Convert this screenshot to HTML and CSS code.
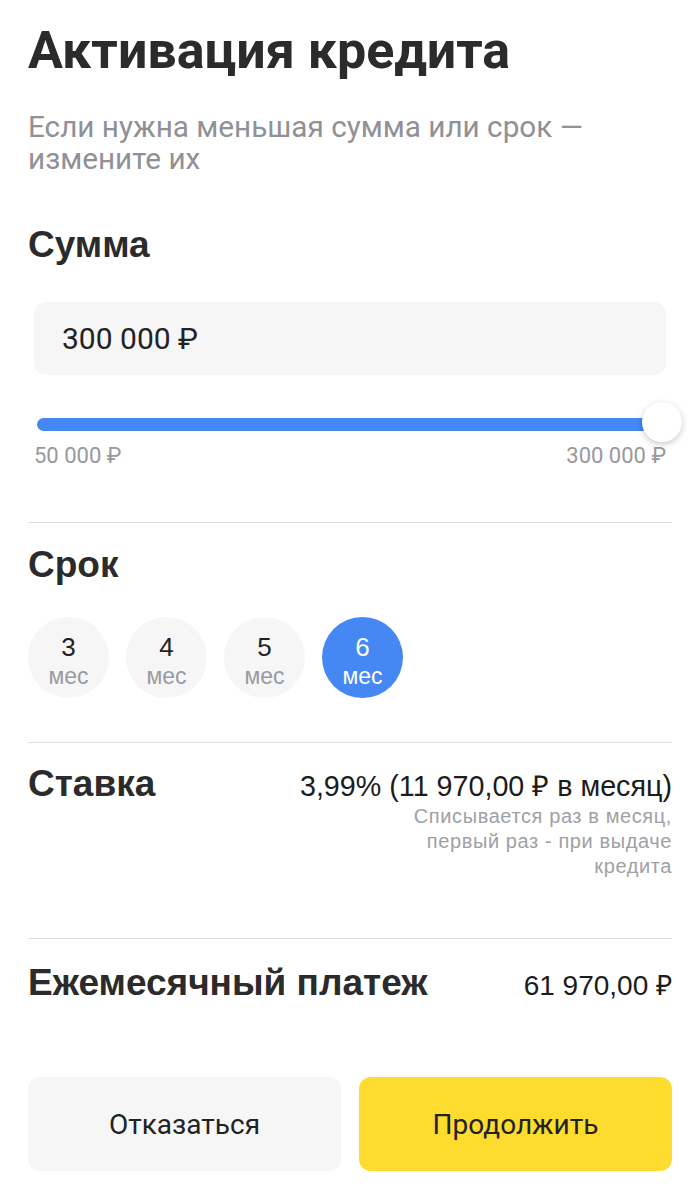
FILE: index.html
```html
<!DOCTYPE html>
<html lang="ru">
<head>
    <meta charset="UTF-8">
    <meta name="viewport" content="width=device-width, initial-scale=1.0">
    <title>Активация кредита</title>
    <link rel="stylesheet" href="styles.css">
</head>
<body>

<div class="page">
    <h1>Активация кредита</h1>
    <p class="subtitle">Если нужна меньшая сумма или срок — измените их</p>

    <section class="block amount">
        <h2>Сумма</h2>
        <div class="amount-input">300 000 ₽</div>
        <div class="slider">
            <div class="track"></div>
            <div class="thumb"></div>
        </div>
        <div class="slider-labels">
            <span>50 000 ₽</span>
            <span>300 000 ₽</span>
        </div>
    </section>

    <section class="block term-block">
        <h2>Срок</h2>
        <div class="terms">
            <div class="term"><span class="num">3</span><span class="unit">мес</span></div>
            <div class="term"><span class="num">4</span><span class="unit">мес</span></div>
            <div class="term"><span class="num">5</span><span class="unit">мес</span></div>
            <div class="term active"><span class="num">6</span><span class="unit">мес</span></div>
        </div>
    </section>

    <section class="block row rate">
        <h2>Ставка</h2>
        <div class="value-col">
            <div class="value">3,99% (11&nbsp;970,00 ₽ в месяц)</div>
            <div class="note">Списывается раз в месяц,<br>первый раз - при выдаче<br>кредита</div>
        </div>
    </section>

    <section class="block row payment">
        <h2>Ежемесячный платеж</h2>
        <div class="value">61&nbsp;970,00 ₽</div>
    </section>

    <div class="actions">
        <button class="btn btn-cancel">Отказаться</button>
        <button class="btn btn-next">Продолжить</button>
    </div>
</div>

</body>
</html>
```

FILE: styles.css
```css
body {
    font-family: Roboto, "Noto Sans", Arial, sans-serif;
    background-color: #fff;
    color: #222;
    margin: 0;
    padding: 0;
}
.page {
    padding: 21px 28px 0;
}
h1 {
    margin: 0;
    font-size: 52px;
    font-weight: 700;
    line-height: 60px;
    color: #2b2b2b;
}
.subtitle {
    margin: 30px 0 0;
    font-size: 29.7px;
    line-height: 32px;
    color: #909095;
    max-width: 600px;
}
h2 {
    margin: 0;
    font-family: "Liberation Sans", Arial, sans-serif;
    font-size: 37px;
    font-weight: 700;
    line-height: 40px;
    color: #2b2b2b;
}
.block + .block {
    border-top: 1px solid #dedede;
}
.amount {
    padding: 50px 0 54px;
}
.amount-input {
    margin: 37px 6px 0;
    height: 73px;
    padding: 0 28px;
    display: flex;
    align-items: center;
    background-color: #f6f6f6;
    border-radius: 12px;
    font-size: 30px;
    color: #222;
}
.slider {
    margin: 27px 8px 0 9px;
    height: 40px;
    display: flex;
    align-items: center;
    position: relative;
}
.track {
    flex: 1;
    height: 13px;
    margin-top: 5px;
    border-radius: 7px;
    background-color: #4588f3;
}
.thumb {
    position: absolute;
    right: -18px;
    top: 0;
    width: 40px;
    height: 40px;
    border-radius: 50%;
    background-color: #fff;
    box-shadow: 0 2px 6px rgba(0, 0, 0, 0.22);
}
.slider-labels {
    margin: 2px 6px 0;
    display: flex;
    justify-content: space-between;
    font-size: 22px;
    line-height: 24px;
    color: #98989c;
}
.term-block {
    padding: 22px 0 44px;
}
.terms {
    display: flex;
    gap: 17px;
    margin-top: 32px;
}
.term {
    width: 81px;
    height: 81px;
    box-sizing: border-box;
    padding-top: 15px;
    border-radius: 50%;
    background-color: #f6f6f6;
    display: flex;
    flex-direction: column;
    align-items: center;
    font-family: "Liberation Sans", Arial, sans-serif;
}
.term .num {
    font-size: 26px;
    line-height: 30px;
    color: #222;
}
.term .unit {
    font-size: 23px;
    line-height: 28px;
    color: #9a9a9e;
}
.term.active {
    background-color: #4588f3;
}
.term.active .num,
.term.active .unit {
    color: #fff;
}
.row {
    display: flex;
    justify-content: space-between;
    align-items: baseline;
}
.value-col {
    text-align: right;
}
.value {
    font-family: "Liberation Sans", Arial, sans-serif;
    font-size: 28px;
    line-height: 36px;
    color: #1c1c1c;
}
.rate .value {
    font-size: 28.7px;
}
.note {
    font-family: "Liberation Sans", Arial, sans-serif;
    font-size: 20px;
    line-height: 25px;
    color: #a0a0a4;
    letter-spacing: 0.6px;
}
.rate {
    padding: 21px 0 59px;
}
.payment {
    padding: 24px 0 73px;
}
.actions {
    display: flex;
    gap: 18px;
}
.btn {
    flex: 1;
    height: 94px;
    border: none;
    border-radius: 12px;
    font-family: inherit;
    font-size: 28px;
    color: #222;
    cursor: pointer;
}
.btn-cancel {
    background-color: #f6f6f6;
}
.btn-next {
    background-color: #fddb2f;
}
```
